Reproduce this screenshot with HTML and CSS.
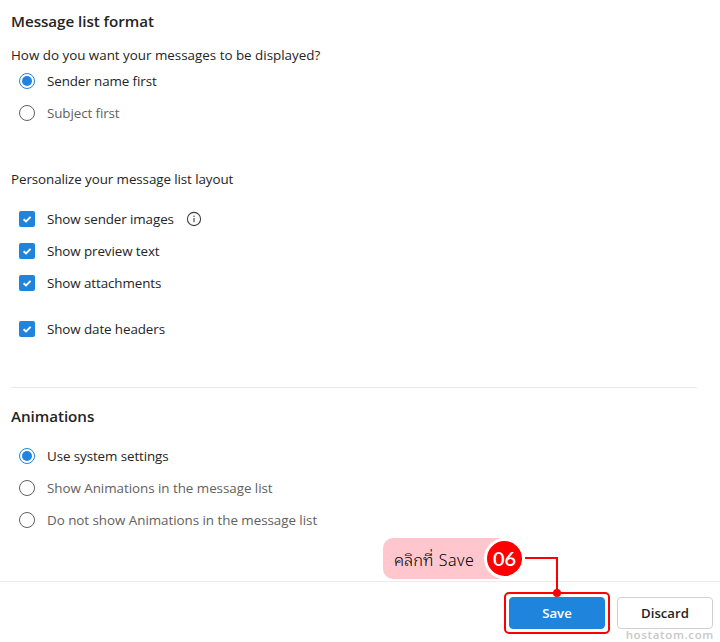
FILE: index.html
```
<!DOCTYPE html>
<html lang="en">
<head>
<meta charset="utf-8">
<title>Message list settings</title>
<link rel="stylesheet" href="styles.css">
</head>
<body>
<main class="settings">
  <section class="format">
    <h2 class="heading">Message list format</h2>
    <p class="question">How do you want your messages to be displayed?</p>
    <div class="option selected"><span class="radio"></span><span class="label">Sender name first</span></div>
    <div class="option"><span class="radio"></span><span class="label">Subject first</span></div>
  </section>
  <section class="layout">
    <p class="question compact">Personalize your message list layout</p>
    <div class="checks">
      <div class="option selected">
        <svg class="check" viewBox="0 0 16 16"><path d="M4.6 8.2 7 10.4l4.6-4.6"/></svg>
        <span class="label">Show sender images</span>
        <svg class="info" viewBox="0 0 16 16"><circle cx="8" cy="8" r="6.6"/><path d="M8 7.1v4.1"/><circle class="dot" cx="8" cy="5.2" r=".75"/></svg>
      </div>
      <div class="option selected">
        <svg class="check" viewBox="0 0 16 16"><path d="M4.6 8.2 7 10.4l4.6-4.6"/></svg>
        <span class="label">Show preview text</span>
      </div>
      <div class="option selected">
        <svg class="check" viewBox="0 0 16 16"><path d="M4.6 8.2 7 10.4l4.6-4.6"/></svg>
        <span class="label">Show attachments</span>
      </div>
      <div class="option selected spaced">
        <svg class="check" viewBox="0 0 16 16"><path d="M4.6 8.2 7 10.4l4.6-4.6"/></svg>
        <span class="label">Show date headers</span>
      </div>
    </div>
  </section>
  <section class="animations">
    <h2 class="heading">Animations</h2>
    <div class="option selected"><span class="radio"></span><span class="label">Use system settings</span></div>
    <div class="option"><span class="radio"></span><span class="label long">Show Animations in the message list</span></div>
    <div class="option"><span class="radio"></span><span class="label long">Do not show Animations in the message list</span></div>
  </section>
</main>
<footer class="footer">
  <button class="button save">Save</button>
  <button class="button discard">Discard</button>
  <span class="watermark">hostatom.com</span>
</footer>
<div class="callout"><span class="callout-text">คลิกที่ <span class="latin">Save</span></span></div>
<span class="step">06</span>
<svg class="connector" viewBox="0 0 40 44"><path d="M0 5h32v33"/><circle cx="32" cy="40" r="4"/></svg>
<div class="highlight"></div>
</body>
</html>
```
FILE: styles.css
```
* { box-sizing: border-box; }
body {
  margin: 0;
  width: 720px;
  height: 642px;
  display: flex;
  flex-direction: column;
  position: relative;
  overflow: hidden;
  background: #fff;
  color: #242424;
  font: 13.4px/20px "Open Sans", "Noto Sans", sans-serif;
}
.settings { height: 581px; padding: 10px 23px 0 11px; }
.heading { margin: 0; font-size: 15.2px; line-height: 22px; font-weight: 600; letter-spacing: -.05px; }
.question { margin: 0; letter-spacing: -.01px; }
.compact { letter-spacing: -.09px; }
.format { height: 159px; }
.format .question { margin-top: 13px; }
.layout { height: 219px; border-bottom: 1px solid #e8e8e8; }
.checks { padding-top: 14px; }
.option { display: flex; align-items: center; height: 32px; padding-left: 8px; color: #616161; }
.selected { color: #242424; }
.spaced { margin-top: 14px; }
.label { margin-left: 12px; white-space: nowrap; letter-spacing: -.1px; }
.long { letter-spacing: -.04px; }
.radio {
  width: 16px;
  height: 16px;
  border: 1px solid #616161;
  border-radius: 50%;
  display: grid;
  place-items: center;
}
.selected .radio { border-color: #1f84dc; }
.selected .radio::after { content: ""; width: 10px; height: 10px; border-radius: 50%; background: #1f84dc; }
.check { width: 16px; height: 16px; border-radius: 2px; background: #1f84dc; }
.check path { fill: none; stroke: #fff; stroke-width: 1.9; }
.info { width: 16px; height: 16px; margin-left: 12px; fill: none; stroke: #424242; stroke-width: 1.1; }
.info .dot { fill: #424242; stroke: none; }
.animations { padding-top: 17px; }
.animations .heading { margin-bottom: 13px; }
.footer {
  height: 61px;
  border-top: 1px solid #ebebeb;
  display: flex;
  justify-content: flex-end;
  gap: 12px;
  padding: 15px 7px 0 0;
  position: relative;
}
.button {
  width: 96px;
  height: 32px;
  padding: 0;
  border: 1px solid #d1d1d1;
  border-radius: 4px;
  background: #fff;
  color: #242424;
  font: 600 13.2px/20px "Open Sans", sans-serif;
}
.save { background: #1f84dc; border-color: #1f84dc; color: #fff; }
.watermark {
  position: absolute;
  right: 6px;
  bottom: 1px;
  color: #c8c8c8;
  font: 600 11.5px/12px "Open Sans", sans-serif;
  letter-spacing: .65px;
}
.callout {
  position: absolute;
  left: 383px;
  top: 538px;
  width: 125px;
  height: 41px;
  padding: 1px 0 0 11px;
  border-radius: 10px;
  background: #ffc7cd;
  color: #000;
  display: flex;
  align-items: center;
  white-space: nowrap;
}
.callout-text { font: 300 16.4px/24px "Noto Sans Thai Looped", "Loma", "Garuda", "Waree", "Norasi", "Liberation Serif", serif; }
.latin { margin-left: 1px; font: 300 16px/24px "Noto Sans", sans-serif; letter-spacing: .5px; }
.step {
  position: absolute;
  left: 484px;
  top: 538px;
  width: 41px;
  height: 41px;
  border: 3px solid #fff;
  border-radius: 50%;
  background: #f00;
  color: #fff;
  font: 600 20px/35px "Lato", sans-serif;
  text-align: center;
}
.connector { position: absolute; left: 525px; top: 553px; width: 40px; height: 44px; z-index: 2; fill: #f00; }
.connector path { fill: none; stroke: #f00; stroke-width: 2; }
.highlight {
  position: absolute;
  left: 504px;
  top: 592px;
  width: 106px;
  height: 42px;
  border: 2px solid #f00;
  border-radius: 5px;
}
```
